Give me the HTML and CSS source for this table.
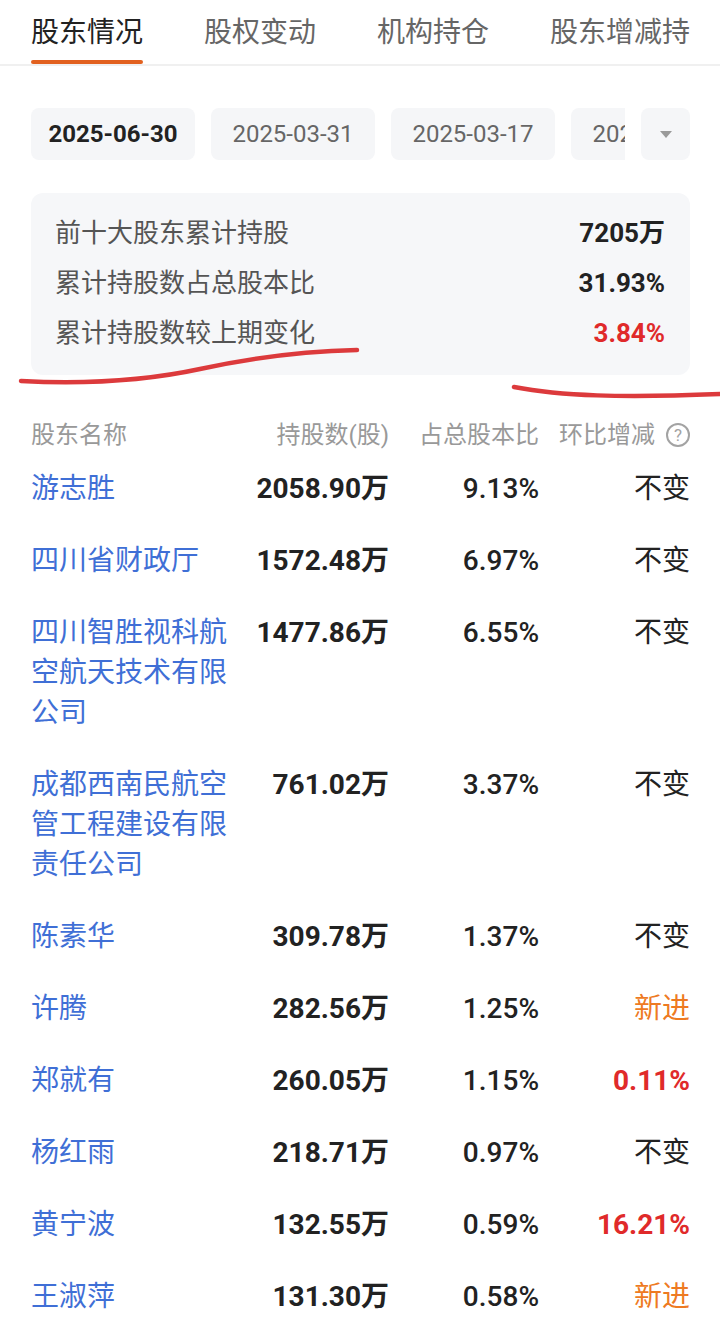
FILE: index.html
```html
<!DOCTYPE html>
<html lang="zh-CN">
<head>
<meta charset="utf-8">
<title>股东情况</title>
<link rel="stylesheet" href="styles.css">
</head>
<body>
<div class="page">
  <nav class="tabs">
    <div class="tab active">股东情况</div>
    <div class="tab">股权变动</div>
    <div class="tab">机构持仓</div>
    <div class="tab">股东增减持</div>
  </nav>

  <div class="dates">
    <div class="date-scroll">
      <div class="chip sel">2025-06-30</div>
      <div class="chip">2025-03-31</div>
      <div class="chip">2025-03-17</div>
      <div class="chip">2024-12-31</div>
    </div>
    <div class="drop"><span class="tri"></span></div>
  </div>

  <section class="summary">
    <div class="sum-row"><span class="sum-label">前十大股东累计持股</span><span class="sum-val">7205万</span></div>
    <div class="sum-row"><span class="sum-label">累计持股数占总股本比</span><span class="sum-val">31.93%</span></div>
    <div class="sum-row"><span class="sum-label">累计持股数较上期变化</span><span class="sum-val red">3.84%</span></div>
  </section>

  <section class="table">
    <div class="thead">
      <span>股东名称</span>
      <span class="r">持股数(股)</span>
      <span class="r">占总股本比</span>
      <span class="r hc">环比增减<span class="help">?</span></span>
    </div>
    <div class="row"><span class="name">游志胜</span><span class="num">2058.90万</span><span class="pct">9.13%</span><span class="chg">不变</span></div>
    <div class="row"><span class="name">四川省财政厅</span><span class="num">1572.48万</span><span class="pct">6.97%</span><span class="chg">不变</span></div>
    <div class="row"><span class="name">四川智胜视科航空航天技术有限公司</span><span class="num">1477.86万</span><span class="pct">6.55%</span><span class="chg">不变</span></div>
    <div class="row"><span class="name">成都西南民航空管工程建设有限责任公司</span><span class="num">761.02万</span><span class="pct">3.37%</span><span class="chg">不变</span></div>
    <div class="row"><span class="name">陈素华</span><span class="num">309.78万</span><span class="pct">1.37%</span><span class="chg">不变</span></div>
    <div class="row"><span class="name">许腾</span><span class="num">282.56万</span><span class="pct">1.25%</span><span class="chg new">新进</span></div>
    <div class="row"><span class="name">郑就有</span><span class="num">260.05万</span><span class="pct">1.15%</span><span class="chg up">0.11%</span></div>
    <div class="row"><span class="name">杨红雨</span><span class="num">218.71万</span><span class="pct">0.97%</span><span class="chg">不变</span></div>
    <div class="row"><span class="name">黄宁波</span><span class="num">132.55万</span><span class="pct">0.59%</span><span class="chg up">16.21%</span></div>
    <div class="row"><span class="name">王淑萍</span><span class="num">131.30万</span><span class="pct">0.58%</span><span class="chg new">新进</span></div>
  </section>

  <svg class="marks" width="720" height="1336" viewBox="0 0 720 1336" aria-hidden="true">
    <path d="M21,381 C80,384 140,382 200,369 S310,351 357,350" />
    <path d="M514,387 C560,396 620,398 722,394" />
  </svg>
</div>
</body>
</html>
```

FILE: styles.css
```css
* { box-sizing: border-box; }

html, body {
  margin: 0;
  padding: 0;
  background: #ffffff;
}

body {
  font-family: Roboto, "Noto Sans CJK SC", sans-serif;
  width: 720px;
  height: 1336px;
  overflow: hidden;
}

.page {
  position: relative;
  width: 720px;
  height: 1336px;
}

/* Tabs */
.tabs {
  display: flex;
  gap: 61px;
  padding-left: 31px;
  border-bottom: 2px solid #f0f0f0;
  white-space: nowrap;
  overflow: hidden;
}

.tab {
  flex-shrink: 0;
  display: flex;
  flex-direction: column;
  font-size: 28px;
  line-height: 40px;
  padding-top: 13px;
  color: #666666;
}

.tab::after {
  content: "";
  height: 4px;
  margin-top: 7px;
  border-radius: 2px;
  background: transparent;
}

.tab.active { color: #222222; }
.tab.active::after { background: #e2611f; }

/* Dates */
.dates {
  display: flex;
  gap: 16px;
  margin: 42px 30px 0 31px;
}

.date-scroll {
  flex: 1;
  display: flex;
  gap: 16px;
  overflow: hidden;
}

.chip {
  flex: 0 0 164px;
  height: 52px;
  border-radius: 8px;
  background: #f5f6f8;
  display: flex;
  align-items: center;
  justify-content: center;
  font-size: 24px;
  color: #666666;
  white-space: nowrap;
}

.chip.sel { color: #222222; font-weight: 700; }

.drop {
  flex: 0 0 49px;
  height: 52px;
  border-radius: 8px;
  background: #f5f6f8;
  display: flex;
  align-items: center;
  justify-content: center;
}

.tri {
  width: 0;
  height: 0;
  border-left: 6px solid transparent;
  border-right: 6px solid transparent;
  border-top: 7px solid #9a9a9a;
}

/* Summary card */
.summary {
  margin: 33px 30px 0 31px;
  background: #f6f7f9;
  border-radius: 12px;
  padding: 15px 25px 17px 24px;
}

.sum-row {
  display: flex;
  justify-content: space-between;
  align-items: center;
  height: 50px;
  line-height: 50px;
}

.sum-label { font-size: 26px; color: #555555; }
.sum-val { font-size: 26px; font-weight: 700; color: #222222; }
.red { color: #e02a2a; }

/* Table */
.table {
  margin: 42px 30px 0 31px;
}

.thead, .row {
  display: grid;
  grid-template-columns: 200px 158px 150px 151px;
}

.thead {
  height: 36px;
  line-height: 36px;
  font-size: 24px;
  color: #999999;
}

.r { text-align: right; }

.hc {
  display: flex;
  justify-content: flex-end;
  align-items: center;
  gap: 11px;
}

.help {
  width: 24px;
  height: 24px;
  border: 2px solid #a3a3a3;
  border-radius: 50%;
  font-size: 17px;
  line-height: 20px;
  text-align: center;
  color: #a3a3a3;
}

.row {
  padding: 16px 0;
  font-size: 28px;
  line-height: 40px;
  align-items: start;
}

.name { color: #3f6fd6; }
.num { text-align: right; font-weight: 700; color: #222222; }
.pct { text-align: right; font-weight: 500; color: #222222; }
.chg { text-align: right; color: #222222; }
.chg.new { color: #ee7a22; }
.chg.up { color: #e02a2a; font-weight: 700; }

/* Hand-drawn annotation strokes */
.marks {
  position: absolute;
  top: 0;
  left: 0;
  pointer-events: none;
}

.marks path {
  fill: none;
  stroke: #dc3a3c;
  stroke-width: 4.5;
  stroke-linecap: round;
}
```
